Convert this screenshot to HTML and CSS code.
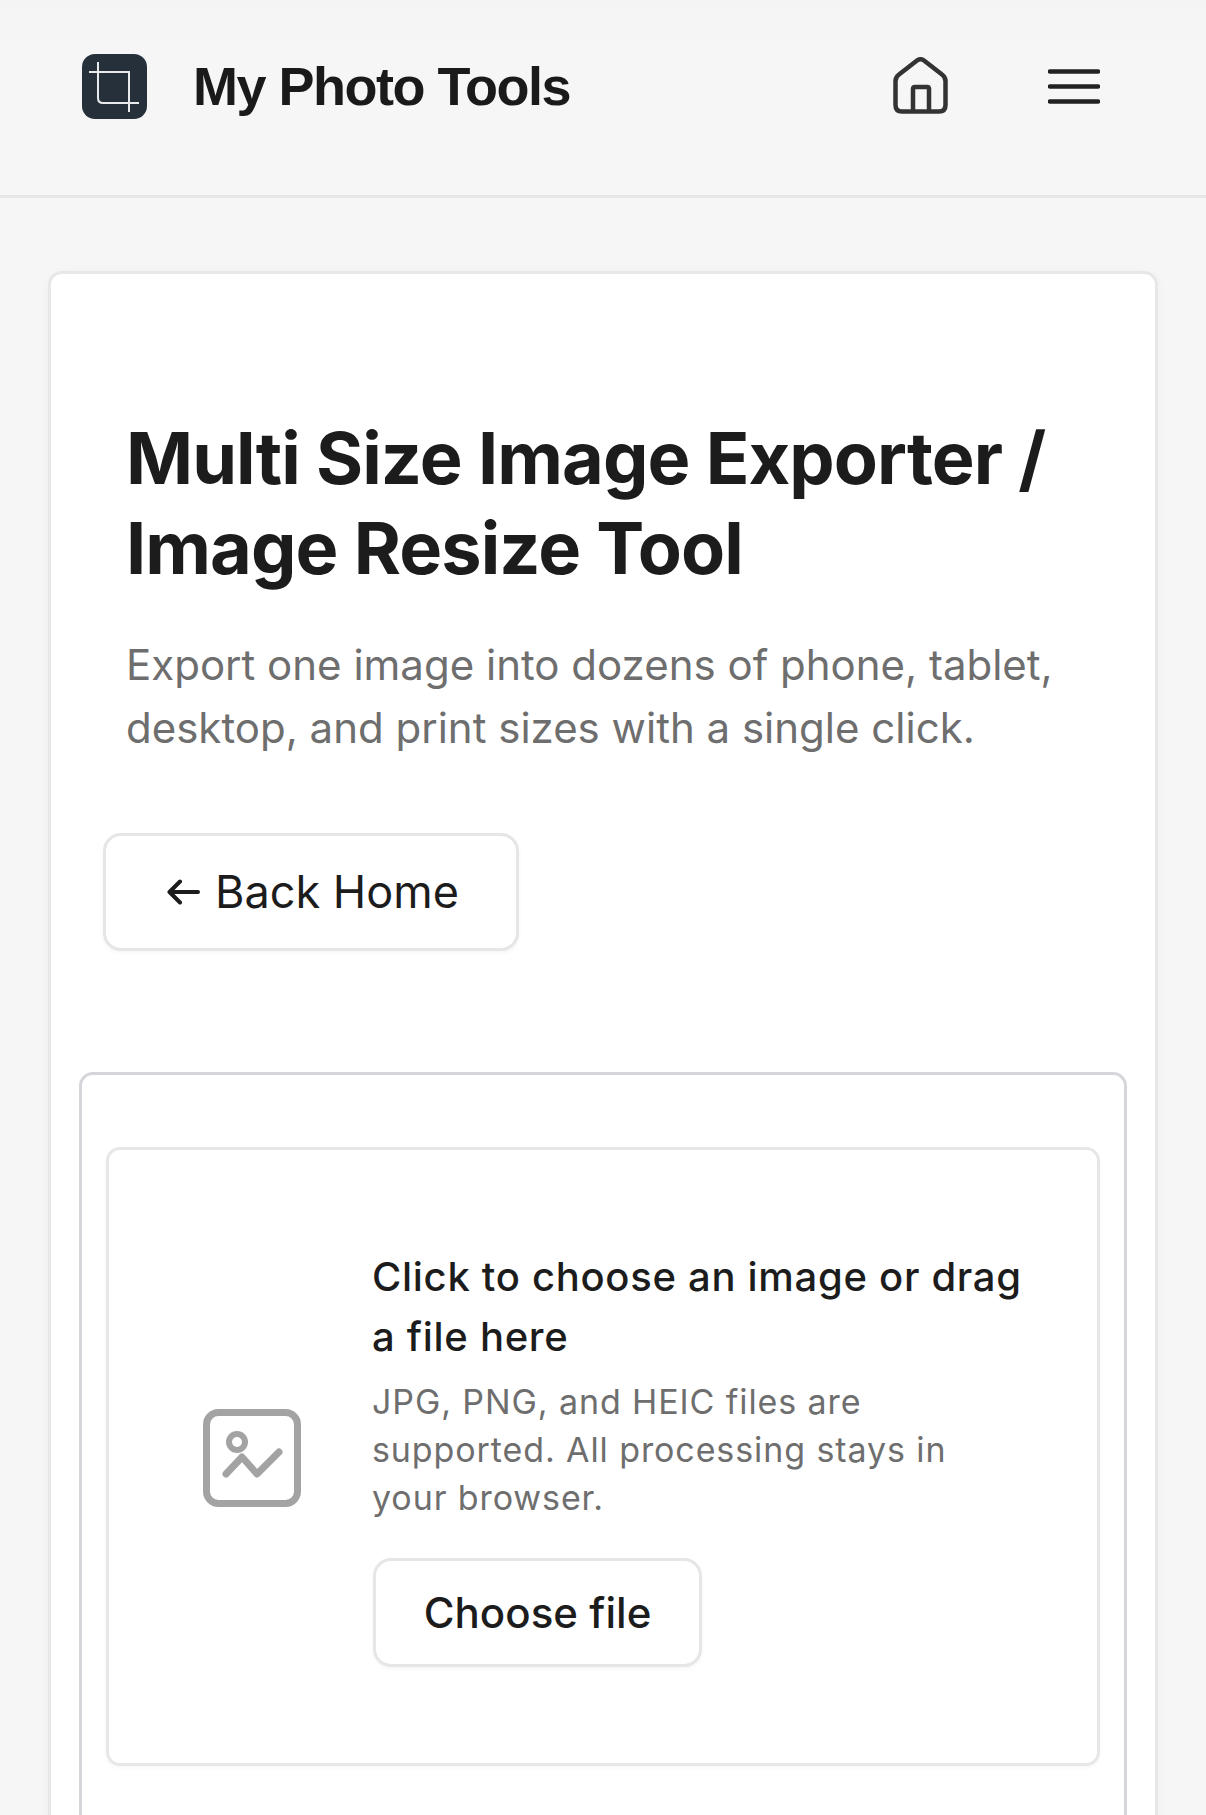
FILE: index.html
```html
<!DOCTYPE html>
<html>
<head>
<meta charset="utf-8">
<title>Multi Size Image Exporter / Image Resize Tool</title>
<link rel="stylesheet" href="styles.css">
</head>
<body>
    <header class="topbar">
        <div class="brand">
            <svg class="brand-logo" viewBox="0 0 65 65" fill="none">
                <rect width="65" height="65" rx="13" fill="#25303b"/>
                <path d="M16 8V44Q16 49 21 49H57M7 18H47V58" stroke="#e8eaec" stroke-width="2"/>
            </svg>
            <span class="brand-name">My Photo Tools</span>
        </div>
        <nav class="topnav">
            <svg class="home-icon" viewBox="0 0 55 57" fill="none" stroke="#333" stroke-width="4.5" stroke-linejoin="round">
                <path d="M2.5 24Q2.5 20 6 17.5L24 3.5Q27.5 1 31 3.5L49 17.5Q52.5 20 52.5 24V48Q52.5 54.5 46 54.5H9Q2.5 54.5 2.5 48Z"/>
                <path d="M20 54.5V32Q20 30 22 30H34Q36 30 36 32V54.5"/>
            </svg>
            <svg class="menu-icon" viewBox="0 0 52 35" fill="none" stroke="#222" stroke-width="4.5" stroke-linecap="round">
                <path d="M2 2.5H50M2 17.5H50M2 32.5H50"/>
            </svg>
        </nav>
    </header>

    <main class="page-card">
        <div class="hero">
            <h1>Multi Size Image Exporter / Image Resize Tool</h1>
            <p>Export one image into dozens of phone, tablet, desktop, and print sizes with a single click.</p>
        </div>
        <div class="back-row">
            <a class="btn btn-back" href="#">
                <svg class="arrow-icon" viewBox="0 0 33 26" fill="none" stroke="#1c1c1c" stroke-width="4" stroke-linecap="round" stroke-linejoin="round">
                    <path d="M31 13H3M13 2.5L2.5 13L13 23.5"/>
                </svg>
                <span class="btn-label">Back Home</span>
            </a>
        </div>
        <section class="tool-panel">
            <div class="dropzone">
                <svg class="image-icon" viewBox="0 0 98 98" fill="none" stroke="#a3a3a3" stroke-width="7" stroke-linecap="round" stroke-linejoin="round">
                    <rect x="3.5" y="3.5" width="91" height="91" rx="12"/>
                    <circle cx="34" cy="33" r="8" stroke-width="6"/>
                    <path d="M23 65L39 48L54 65L76 43"/>
                </svg>
                <div class="dropzone-text">
                    <h2>Click to choose an image or drag a file here</h2>
                    <p>JPG, PNG, and HEIC files are supported. All processing stays in your browser.</p>
                    <button class="btn btn-file" type="button">Choose file</button>
                </div>
            </div>
        </section>
    </main>
</body>
</html>
```

FILE: styles.css
```css
html, body {
    height: 1815px;
    overflow: hidden;
}

body {
    margin: 0;
    background: #f6f6f6;
    color: #1c1c1c;
    font-family: Inter, "Liberation Sans", sans-serif;
}

.topbar {
    height: 141px;
    border-bottom: 3px solid #e6e6e6;
    padding: 54px 106px 0 82px;
    display: flex;
    justify-content: space-between;
    align-items: flex-start;
    background: linear-gradient(#f4f4f4, #f6f6f6 50px);
}

.brand {
    display: flex;
    align-items: center;
    gap: 46px;
}

.brand-logo {
    width: 65px;
    height: 65px;
}

.brand-name {
    font-family: "Liberation Sans", Arial, sans-serif;
    font-weight: 700;
    font-size: 54px;
    letter-spacing: -1.5px;
    color: #1a1a1a;
    margin-top: -2px;
}

.topnav {
    display: flex;
    align-items: center;
    gap: 100px;
    padding-top: 3px;
}

.home-icon {
    width: 55px;
    height: 57px;
}

.menu-icon {
    width: 52px;
    height: 35px;
    margin-top: 2px;
}

.page-card {
    margin: 73px 48px 0;
    height: 1700px;
    background: #fff;
    border: 3px solid #e7e7e7;
    border-radius: 14px;
    box-shadow: 0 2px 8px rgba(0, 0, 0, 0.04);
    padding: 139px 28px 0;
}

.hero {
    padding: 0 47px;
}

.hero h1 {
    margin: 0;
    font-size: 72px;
    line-height: 90px;
    font-weight: 700;
    letter-spacing: -0.9px;
    color: #1c1c1c;
}

.hero p {
    margin: 40px 0 0;
    font-size: 42px;
    line-height: 63px;
    color: #6e6e6e;
}

.back-row {
    margin-top: 74px;
    padding-left: 24px;
}

.btn {
    display: inline-flex;
    align-items: center;
    justify-content: center;
    box-sizing: border-box;
    background: #fff;
    border: 3px solid #e6e6e6;
    border-radius: 18px;
    color: #1c1c1c;
    font-family: inherit;
    text-decoration: none;
    box-shadow: 0 2px 4px rgba(0, 0, 0, 0.04);
}

.btn-back {
    width: 416px;
    height: 118px;
    gap: 15px;
    padding-left: 4px;
    font-size: 45px;
}

.btn-label {
    margin-bottom: 2px;
}

.arrow-icon {
    width: 33px;
    height: 26px;
}

.tool-panel {
    margin-top: 121px;
    border: 3px solid #d4d6da;
    border-radius: 14px;
    padding: 72px 24px 73px;
}

.dropzone {
    display: flex;
    align-items: center;
    gap: 71px;
    padding: 97px 68px 96px 94px;
    border: 3px solid #e7e7e7;
    border-radius: 14px;
    box-shadow: 0 2px 4px rgba(0, 0, 0, 0.03);
}

.image-icon {
    flex: none;
    width: 98px;
    height: 98px;
    margin-top: 2px;
}

.dropzone-text h2 {
    margin: 0;
    font-size: 40px;
    line-height: 60px;
    font-weight: 500;
    letter-spacing: 0.7px;
    color: #1c1c1c;
}

.dropzone-text p {
    margin: 11px 0 0;
    font-size: 34px;
    line-height: 48px;
    letter-spacing: 0.9px;
    color: #6e6e6e;
}

.btn-file {
    margin-top: 36px;
    margin-left: 1px;
    width: 329px;
    height: 109px;
    font-size: 42px;
    font-weight: 500;
    letter-spacing: 0.05px;
}
```
